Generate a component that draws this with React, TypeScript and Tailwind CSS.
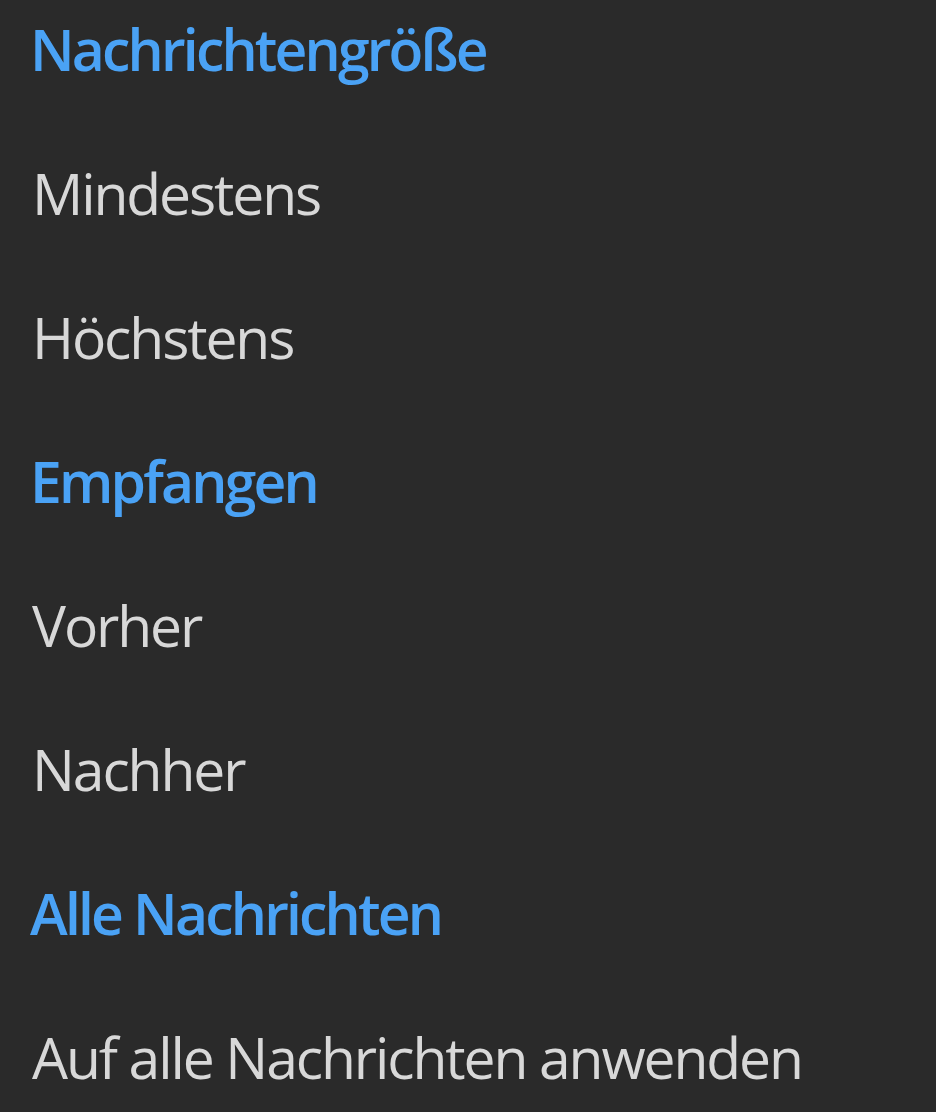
import React from "react";

const rows: { text: string; heading: boolean }[] = [
  { text: "Nachrichtengröße", heading: true },
  { text: "Mindestens", heading: false },
  { text: "Höchstens", heading: false },
  { text: "Empfangen", heading: true },
  { text: "Vorher", heading: false },
  { text: "Nachher", heading: false },
  { text: "Alle Nachrichten", heading: true },
  { text: "Auf alle Nachrichten anwenden", heading: false },
];

export default function App() {
  return (
    <div
      className="w-[936px] h-[1112px] overflow-hidden bg-[#2a2a2a] pl-[30px] flex flex-col"
      style={{ fontFamily: '"Open Sans", "Noto Sans", sans-serif' }}
    >
      {rows.map((r, i) =>
        r.heading ? (
          <div
            key={i}
            className="h-[144px] shrink-0 pt-[21px] text-[57px] leading-none font-semibold tracking-[-2.8px] text-[#4aa2f5] whitespace-nowrap"
          >
            {r.text}
          </div>
        ) : (
          <div
            key={i}
            className="h-[144px] shrink-0 pt-[21px] pl-[2px] text-[57px] leading-none font-normal tracking-[-2.1px] text-[#d8d8d8] whitespace-nowrap"
          >
            {r.text}
          </div>
        )
      )}
    </div>
  );
}
